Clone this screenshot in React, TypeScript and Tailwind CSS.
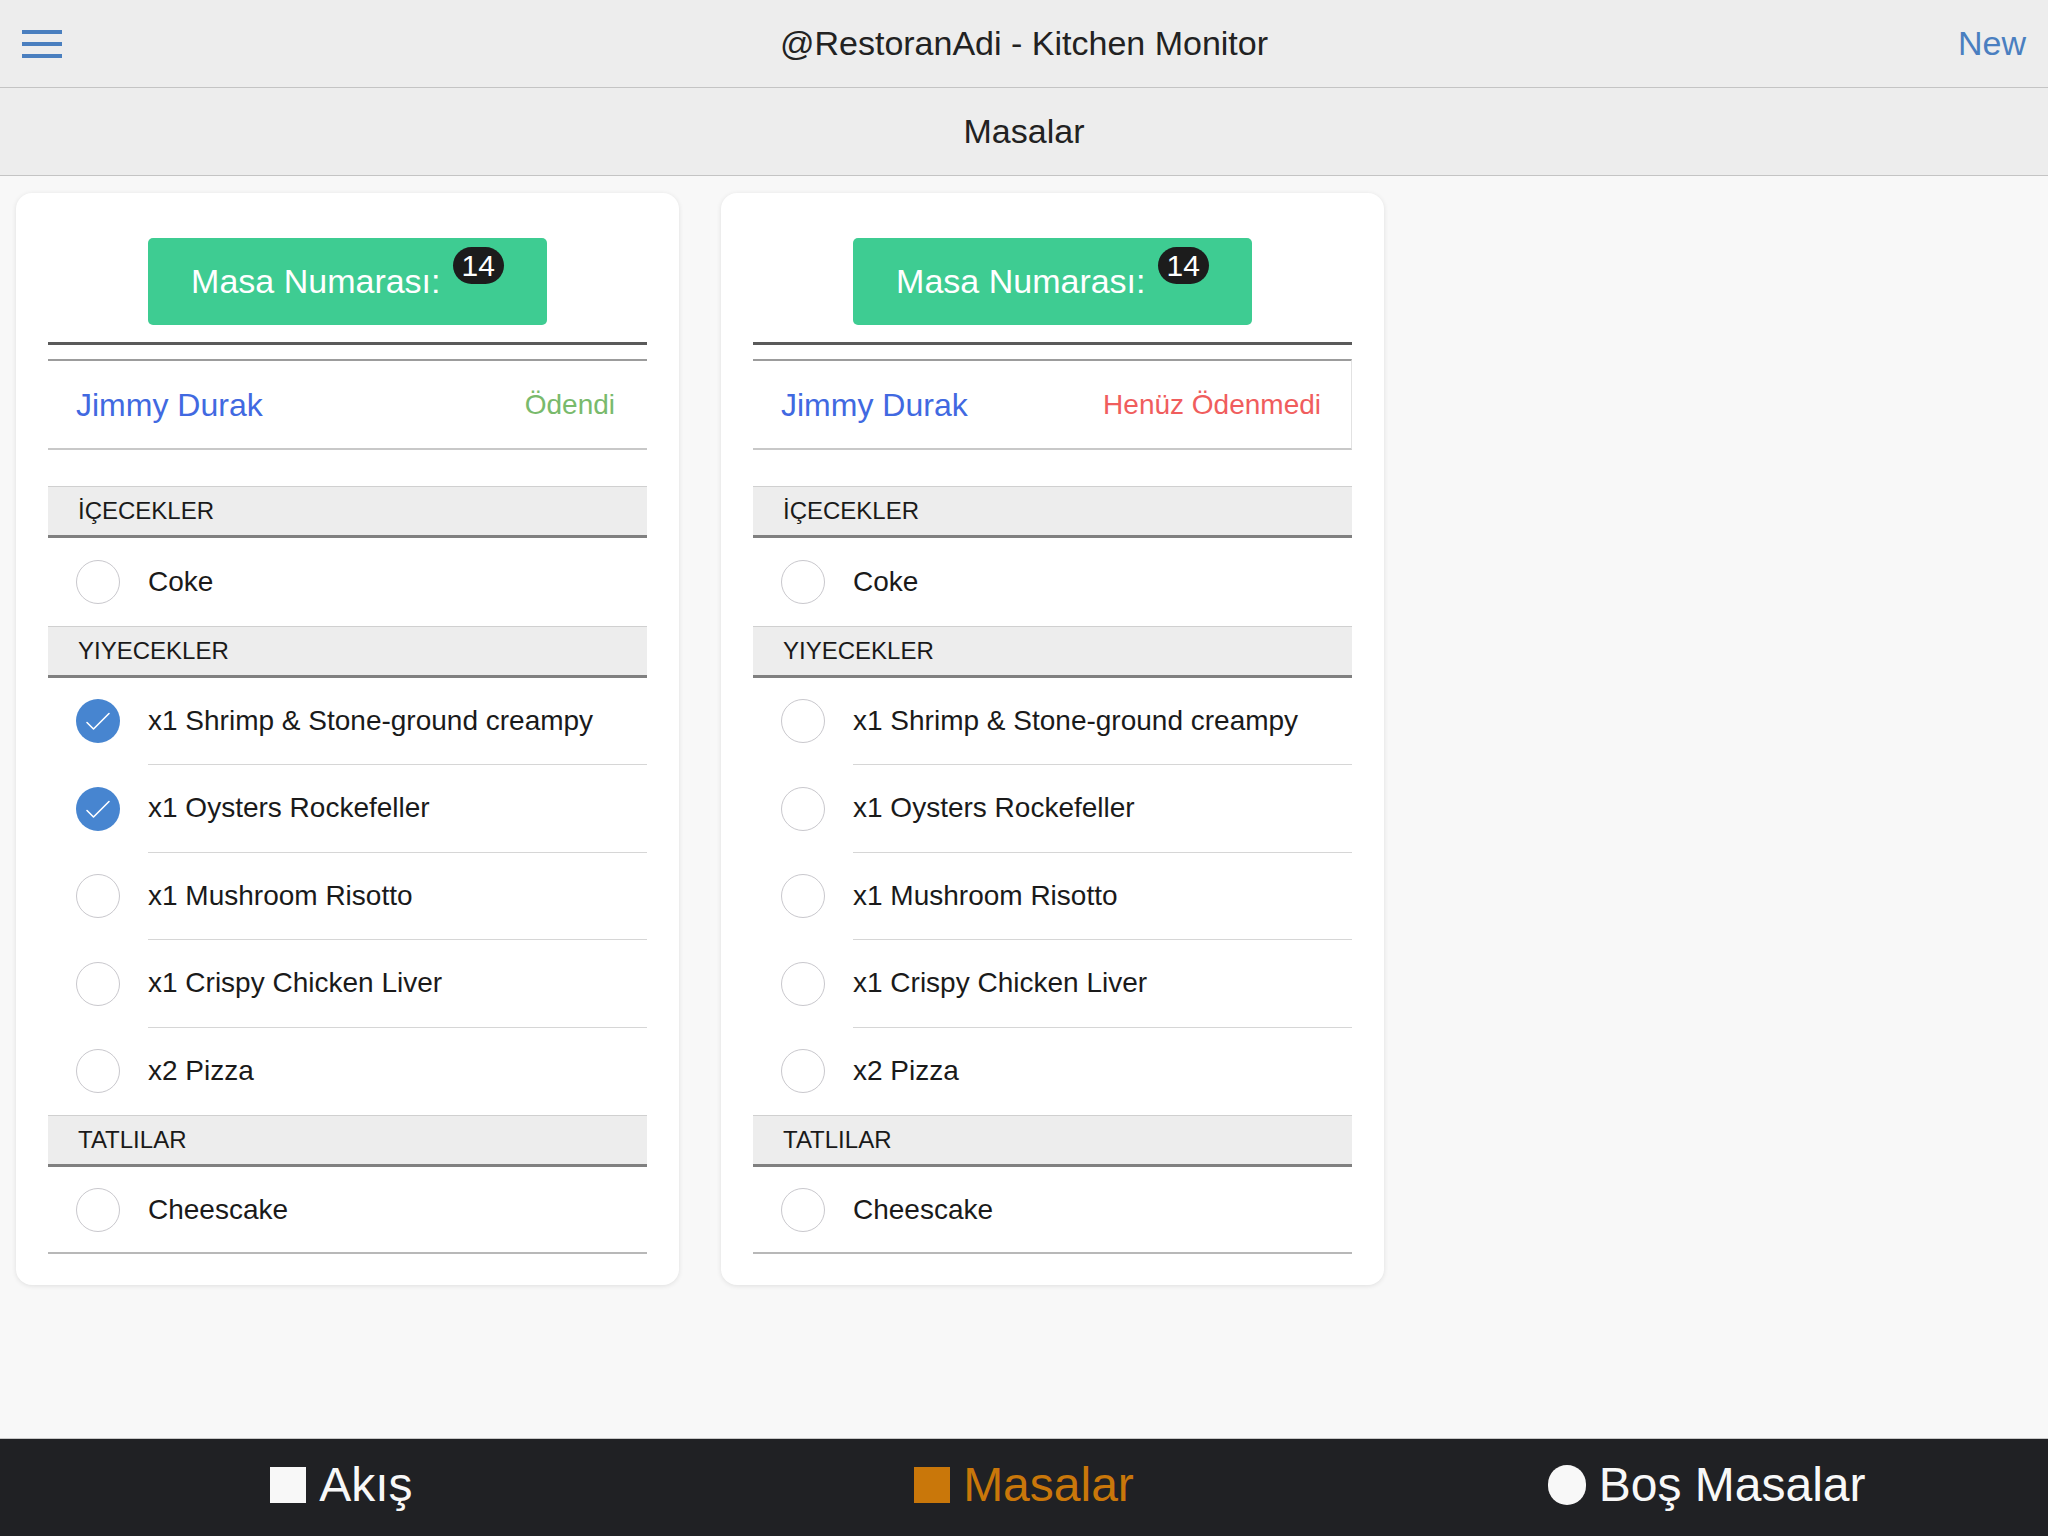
import React from 'react';

type Item = { name: string; done: boolean };
type Section = { title: string; items: Item[] };

const buildSections = (checked: boolean): Section[] => [
    { title: 'İÇECEKLER', items: [{ name: 'Coke', done: false }] },
    {
        title: 'YIYECEKLER',
        items: [
            { name: 'x1 Shrimp & Stone-ground creampy', done: checked },
            { name: 'x1 Oysters Rockefeller', done: checked },
            { name: 'x1 Mushroom Risotto', done: false },
            { name: 'x1 Crispy Chicken Liver', done: false },
            { name: 'x2 Pizza', done: false },
        ],
    },
    { title: 'TATLILAR', items: [{ name: 'Cheescake', done: false }] },
];

const CheckCircle: React.FC<{ done: boolean }> = ({ done }) =>
    done ? (
        <div className="flex h-[44px] w-[44px] shrink-0 items-center justify-center rounded-full bg-[#4785d0]">
            <svg width="44" height="44" viewBox="0 0 44 44" fill="none">
                <path d="M11 23.5 L17.5 30 L33 14.5" stroke="#ffffff" strokeWidth="1.6" strokeLinecap="round" strokeLinejoin="round" />
            </svg>
        </div>
    ) : (
        <div className="h-[44px] w-[44px] shrink-0 rounded-full border-[1.5px] border-[#c9c8cd] bg-white" />
    );

const TableCard: React.FC<{ paid: boolean; checked: boolean }> = ({ paid, checked }) => {
    const sections = buildSections(checked);
    return (
        <div className="w-[663px] shrink-0 rounded-[16px] bg-white px-8 pt-[45px] pb-[31px] shadow-[0_1px_5px_rgba(0,0,0,0.10)]">
            {/* Table number button */}
            <div className="mx-auto flex h-[87px] w-[399px] items-center justify-center rounded-[5px] bg-[#3ecc92] text-[34px] text-white">
                <span>Masa Numarası:</span>
                <span className="relative -top-[16px] ml-[12px] flex h-[37px] items-center rounded-full bg-[#1c1c1c] px-[9px] text-[30px] leading-none">
                    14
                </span>
            </div>

            <div className="mt-[17px] h-[17px] border-t-[3px] border-[#5a5a5a]" />

            {/* Customer row */}
            <div
                className={`flex h-[91px] items-center justify-between border-t-2 border-b-2 border-t-[#9c9c9c] border-b-[#c8c8c8] pl-7 ${
                    paid ? 'pr-8' : 'border-r border-r-[#e2e2e2] pr-[30px]'
                }`}
            >
                <span className="text-[32px] text-[#4169e1]">Jimmy Durak</span>
                {paid ? (
                    <span className="text-[28px] text-[#79ba6c]">Ödendi</span>
                ) : (
                    <span className="text-[28px] text-[#f05d5d]">Henüz Ödenmedi</span>
                )}
            </div>

            {/* Orders */}
            <div className="mt-[36px] border-b-2 border-[#b8b8b8]">
                {sections.map((section, s) => (
                    <div key={section.title}>
                        <div className="flex h-[52px] items-center border-t border-b-[3px] border-t-[#d0d0d0] border-b-[#808080] bg-[#ededed] pl-[30px] text-[24px] text-[#1a1a1a]">
                            {section.title}
                        </div>
                        {section.items.map((item, i) => (
                            <div key={item.name} className="flex items-stretch pl-7">
                                <div className={`flex items-center ${s === sections.length - 1 ? 'h-[85px]' : 'h-[87.5px]'}`}>
                                    <CheckCircle done={item.done} />
                                </div>
                                <div
                                    className={`ml-7 flex flex-1 items-center text-[28px] text-[#1a1a1a] ${
                                        i < section.items.length - 1 ? 'border-b border-[#d6d6d6]' : ''
                                    }`}
                                >
                                    {item.name}
                                </div>
                            </div>
                        ))}
                    </div>
                ))}
            </div>
        </div>
    );
};

const App: React.FC = () => {
    return (
        <div className="flex h-screen flex-col overflow-hidden bg-[#f8f8f8] font-['Liberation_Sans',Arial,sans-serif]">
            {/* Top bar */}
            <header className="grid h-[88px] shrink-0 grid-cols-[1fr_auto_1fr] items-center border-b border-[#c4c4c4] bg-[#ededed]">
                <button className="ml-[22px] flex w-[40px] flex-col gap-[8px]">
                    <span className="block h-[4px] w-[40px] bg-[#4a7fbf]" />
                    <span className="block h-[4px] w-[40px] bg-[#4a7fbf]" />
                    <span className="block h-[4px] w-[40px] bg-[#4a7fbf]" />
                </button>
                <h1 className="text-[34px] text-[#222222]">@RestoranAdi - Kitchen Monitor</h1>
                <div className="justify-self-end pr-[22px] text-[34px] text-[#4a7fc0]">New</div>
            </header>

            <div className="flex h-[88px] shrink-0 items-center justify-center border-b border-[#c4c4c4] bg-[#ededed] text-[34px] text-[#222222]">
                Masalar
            </div>

            <main className="flex flex-1 items-start gap-[42px] overflow-hidden pt-[17px] pl-4">
                <TableCard paid={true} checked={true} />
                <TableCard paid={false} checked={false} />
            </main>

            {/* Bottom tabs */}
            <nav className="grid h-[98px] shrink-0 grid-cols-3 border-t border-[#c8c8c8] bg-[#202124] pb-[6px] text-[48px]">
                <div className="flex items-center justify-center gap-[13px] text-[#f8f8f8]">
                    <span className="block h-[36px] w-[36px] bg-[#f8f8f8]" />
                    <span>Akış</span>
                </div>
                <div className="flex items-center justify-center gap-[13px] text-[#c9770a]">
                    <span className="block h-[36px] w-[36px] bg-[#c9770a]" />
                    <span>Masalar</span>
                </div>
                <div className="flex items-center justify-center gap-[13px] text-[#f8f8f8]">
                    <span className="block h-[40px] w-[38px] rounded-full bg-[#f8f8f8]" />
                    <span>Boş Masalar</span>
                </div>
            </nav>
        </div>
    );
};

export default App;
